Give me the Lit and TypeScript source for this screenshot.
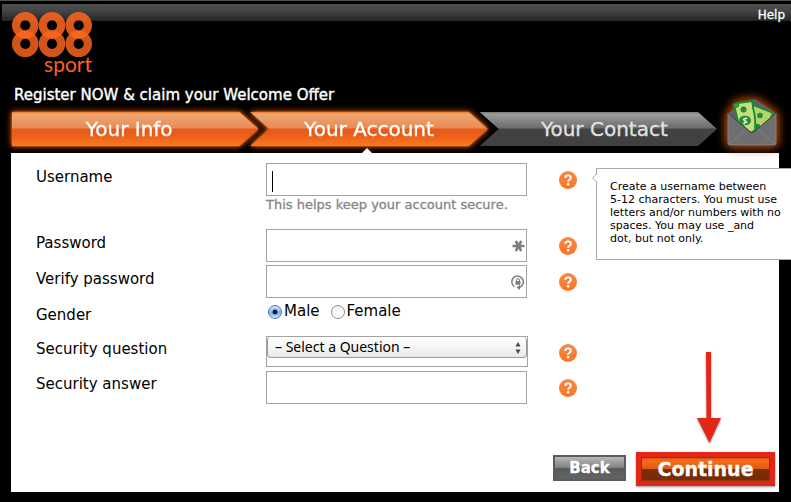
import { LitElement, html, css, svg, nothing } from "lit";
import { customElement, property, state } from "lit/decorators.js";
import { classMap } from "lit/directives/class-map.js";

const SANS = css`"DejaVu Sans", Verdana, "Liberation Sans", sans-serif`;

@customElement("brand-logo")
class BrandLogo extends LitElement {
  static styles = css`
    :host { display: flex; flex-direction: column; width: 80px; }
    svg { display: block; width: 80px; height: 46px; }
    .word { align-self: flex-end; font: 21px/20px Lato, sans-serif; color: #f9631f; margin-top: -4px; }
  `;
  render() {
    return html`
      <svg viewBox="0 0 80 46" fill="none" stroke="#ff661f" stroke-width="8.2" aria-label="888">
        ${[13.3, 40, 66.7].map(
          (x) => svg`<g><circle cx=${x} cy="13.3" r="9.2" opacity=".86"/><circle cx=${x} cy="31.8" r="9.2" opacity=".82"/></g>`
        )}
      </svg>
      <span class="word">sport</span>
    `;
  }
}

@customElement("step-bar")
class StepBar extends LitElement {
  @property({ type: Array }) steps: string[] = [];
  @property({ type: Number }) current = 0;

  static styles = css`
    :host { display: block; }
    ol { display: flex; margin: 0; padding: 0; list-style: none; }
    li { flex: 1; position: relative; }
    li.first { flex: 1 1 9px; }
    li + li { margin-left: -8px; }
    .lit { filter: drop-shadow(0 0 1px #ff7a1c) drop-shadow(0 0 3px #d85300); }
    .shape {
      height: 34px; box-sizing: border-box; display: flex; align-items: center; justify-content: center;
      font: 20px/34px ${SANS}; color: #e2e2e2; -webkit-text-stroke: 0.3px;
      background: linear-gradient(#727272 0, #9c9c9c 2px, #6c6c6c 16px, #434343 17px, #404040 100%);
      clip-path: polygon(0 0, calc(100% - 19px) 0, 100% 50%, calc(100% - 19px) 100%, 0 100%, 19px 50%);
    }
    .first .shape { padding-right: 12px; clip-path: polygon(0 0, calc(100% - 19px) 0, 100% 50%, calc(100% - 19px) 100%, 0 100%); }
    .last .shape { padding-left: 12px; }
    .lit .shape {
      color: #fff;
      background: linear-gradient(#f47a25 0, #eda672 2px, #e98b55 16px, #e9591a 17px, #ec5f1a 24px, #fb7a20 100%);
    }
    .here::after {
      content: ""; position: absolute; top: 36px; left: 50%; margin-left: -7px;
      border: 5px solid transparent; border-top: 0; border-bottom-color: #fff;
    }
  `;
  render() {
    return html`<ol>
      ${this.steps.map(
        (s, i) => html`<li class=${classMap({ first: i === 0, last: i === this.steps.length - 1, here: i === this.current })}>
          <div class=${classMap({ lit: i <= this.current })}><div class="shape">${s}</div></div>
        </li>`
      )}
    </ol>`;
  }
}

@customElement("cash-envelope")
class CashEnvelope extends LitElement {
  static styles = css`
    :host { display: block; width: 50px; height: 47px; filter: drop-shadow(0 0 4px #b04a0c) drop-shadow(0 0 5px #8a3400); }
    svg { display: block; }
  `;
  render() {
    return html`
      <svg width="50" height="47" viewBox="0 0 50 47" aria-label="Welcome offer">
        <path d="M1 15 L22 2 Q26 0 30 2 L49 15 L40 32 H10Z" fill="#5f5f61" stroke="#747476" stroke-width=".8"/>
        <g stroke="#128a3a" stroke-width="1.800" stroke-linejoin="round">
          <path d="M26 6 L46 14 Q44 19 41 23 L31 33 L26 32Z" fill="#b4d468"/>
          <circle cx="33" cy="16.500" r="2.800" fill="#238a3c" stroke="none"/>
          <path d="M29 25 Q34 24 33 29 L29 32Z" fill="#1f8a3c" stroke="none"/>
          <path d="M11 4 L25 2 Q26 5 26 9 Q29 18 28 31 L24 34 L11 23 Q10 17 8 10 L7 8Z" fill="#c3e078"/>
          <path d="M6 5 L11 4 L12 7 L8 9Z" fill="#2aa24b" stroke-width="1"/>
          <circle cx="16.500" cy="10.500" r="3" fill="#238a3c" stroke="none"/>
          <ellipse cx="18" cy="21.500" rx="6" ry="4.800" fill="#1f8a3c" stroke="none"/>
          <path d="M20.500 19.500 C17 18.500 15 20.500 17.500 21.500 C21 22.500 21 24.300 15.800 24 M18.800 18 L17.200 25.300" fill="none" stroke="#eef7c8" stroke-width="1.100"/>
        </g>
        <path d="M1 14 L23 33 Q25 34.500 27 33 L49 14 V44 Q49 46 47 46 H3 Q1 46 1 44Z" fill="#6f6f71" stroke="#868688" stroke-width=".8"/>
        <path d="M1 14 L23 33 Q25 34.500 27 33 L49 14" fill="none" stroke="#3a3a3d" stroke-width="1"/>
        <path d="M2 45 L19 30 M48 45 L31 30" stroke="#858587" stroke-width=".8"/>
      </svg>
    `;
  }
}

@customElement("help-button")
class HelpButton extends LitElement {
  static styles = css`
    :host { display: block; }
    button { display: block; width: 18px; height: 18px; padding: 0; border: 0; background: none; }
    svg { display: block; }
  `;
  render() {
    return html`<button type="button" aria-label="Help with this field">
      <svg width="18" height="18" viewBox="0 0 18 18">
        <defs><linearGradient id="g" x1="0" y1="0" x2="0" y2="1"><stop offset="0" stop-color="#f08a4c"/><stop offset="1" stop-color="#ff7420"/></linearGradient></defs>
        <circle cx="9" cy="9" r="9" fill="url(#g)"/>
        <path d="M6.200 6.800 Q6.400 4.400 9 4.400 Q11.800 4.400 11.800 6.700 Q11.800 8 10.300 8.900 Q9.100 9.600 9.100 10.900" fill="none" stroke="#fff" stroke-width="1.900"/>
        <circle cx="9.100" cy="13.200" r="1.250" fill="#fff"/>
      </svg>
    </button>`;
  }
}

@customElement("app-root")
class AppRoot extends LitElement {
  @state() private gender = "Male";

  static styles = css`
    :host { display: block; min-height: 100vh; box-sizing: border-box; overflow: hidden; background: #000; font: 15px/18px ${SANS}; color: #000; }
    .topbar { border-top: 1px solid #505050; padding: 3px 0 0 2px; }
    .strip { display: flex; justify-content: flex-end; height: 17px; padding-right: 6px; background: linear-gradient(#4c4c4c, #474747 6px, #242424); }
    .help { font-size: 12px; line-height: 22px; color: #fff; text-decoration: none; -webkit-text-stroke: 0.3px; }
    .brand { position: relative; margin: -9px 0 0 12px; }
    h1 { margin: 12px 0 0 14px; font-size: 15px; line-height: 18px; font-weight: 400; color: #fff; -webkit-text-stroke: 0.4px; }
    .progress { display: flex; align-items: flex-end; gap: 10px; margin: -5px 14px 7px 12px; }
    step-bar { flex: 1; }
    form { margin: 0 12px 10px 11px; padding: 10px 4px 6px 25px; background: #fff; }
    .rows { display: flex; flex-direction: column; gap: 3px; }
    .row { position: relative; display: grid; grid-template-columns: 199px 262px 18px; column-gap: 31px; align-items: start; min-height: 33px; }
    .name { padding-top: 5px; }
    .low > .name { padding-top: 4px; }
    .short { min-height: 32px; }
    .field { position: relative; }
    .field input { display: block; box-sizing: border-box; width: 261px; height: 33px; padding: 0 24px 0 5px; border: 1px solid #a3a3a3; border-radius: 0; outline: 0; background: #fff; font: inherit; caret-color: transparent; }
    .caret { position: absolute; left: 6px; top: 8px; width: 1px; height: 21px; background: #000; }
    .glyph { position: absolute; right: 3px; top: 10px; }
    .hint { display: block; height: 29px; margin-top: 1px; font-size: 13px; line-height: 15px; color: #858585; -webkit-text-stroke: 0.3px; }
    help-button { margin-top: 8px; }
    .radios { display: flex; gap: 11px; padding: 1px 0 0 2px; }
    .radios label { display: flex; align-items: center; gap: 2px; }
    .radios input { appearance: none; width: 14px; height: 14px; margin: 2px 0 0; border: 1px solid #8f8f8f; border-radius: 50%; background: linear-gradient(#f2f2f2, #fff); }
    .radios input:checked { border-color: #5876a8; background: radial-gradient(circle, #10203c 0 2px, transparent 3px), linear-gradient(#cfe4fa, #79b4ee 60%, #c4ecff); }
    .drop { position: relative; box-sizing: border-box; height: 31px; border: 1px solid #a3a3a3; }
    .drop select { appearance: none; display: block; box-sizing: border-box; width: 100%; height: 21px; padding: 0 22px 0 7px; border: 1px solid #9a9a9a; border-top: 0; border-radius: 4px; background: linear-gradient(#fff, #f6f6f6 50%, #e9e9e9); font: 14px/20px "Noto Sans", ${SANS}; color: #000; }
    .updown { position: absolute; right: 6px; top: 5px; pointer-events: none; }
    .tip { position: absolute; left: 560px; top: 5px; box-sizing: border-box; width: 220px; height: 92px; padding: 11px 13px; border: 1px solid #a9a9a9; background: #fff; font-size: 11px; line-height: 13px; z-index: 1; white-space: pre-line; }
    .tip svg { position: absolute; left: -5px; top: 4px; }
    .actions { display: flex; flex-direction: column; align-items: flex-end; margin-top: -52px; }
    .arrow { margin-right: 53px; filter: drop-shadow(0 1px 1px #999); }
    .buttons { display: flex; align-items: center; gap: 10px; margin-top: 8px; }
    .buttons button { box-sizing: border-box; padding: 0; font-family: inherit; font-weight: 700; color: #fff; -webkit-text-stroke: 0.3px; }
    .back { width: 73px; height: 26px; margin-top: -2px; border: 2px solid #5c5c5c; font-size: 15px; line-height: 20px; background: linear-gradient(#b8b8b8, #808080 50%, #5a5a5a 52%, #636363); }
    .go { width: 139px; height: 34px; border: 5px solid #e42618; font-size: 19px; line-height: 22px; background: linear-gradient(#cf5010, #fb6c1c 4px, #dd5a12 50%, #7c2f05 52%, #742a04); box-shadow: inset 0 0 0 1px #8a3a0a, 0 1px 2px #999; }
  `;

  private label(id: string, text: string) {
    return html`<label class="name" for=${id}>${text}</label>`;
  }

  private option(value: string) {
    return html`<label><input type="radio" name="gender" value=${value} .checked=${this.gender === value}
      @change=${() => (this.gender = value)} />${value}</label>`;
  }

  private textField(id: string, type: string, icon: unknown = nothing) {
    return html`<div class="field"><input id=${id} type=${type} />${icon}</div>`;
  }

  render() {
    const star = html`<svg class="glyph" width="13" height="14" viewBox="0 0 13 14" stroke="#7e7e7e" stroke-width="2.600">
      <path d="M.5 7H12.500M3.700 2L9.300 12M9.300 2L3.700 12"/></svg>`;
    const lock = html`<svg class="glyph" width="14" height="15" viewBox="0 0 14 15" fill="none" stroke="#7e7e7e">
      <path d="M3.500 11.800A5.800 5.800 0 1 1 8 12.500" stroke-width="1.500"/>
      <path d="M9 9.800L5.500 12.400L9 15Z" fill="#7e7e7e" stroke="none"/>
      <rect x="4.500" y="6" width="5" height="3.800" fill="#7e7e7e" stroke="none"/>
      <path d="M5.500 6V5Q5.500 3.800 7 3.800Q8.500 3.800 8.500 5V6"/></svg>`;
    return html`
      <header>
        <div class="topbar"><div class="strip"><a class="help" href="#help">Help</a></div></div>
        <brand-logo class="brand"></brand-logo>
        <h1>Register NOW &amp; claim your Welcome Offer</h1>
        <div class="progress">
          <step-bar .steps=${["Your Info", "Your Account", "Your Contact"]} .current=${1}></step-bar>
          <cash-envelope></cash-envelope>
        </div>
      </header>
      <form @submit=${(e: Event) => e.preventDefault()}>
        <div class="rows">
          <div class="row">
            ${this.label("user", "Username")}
            <div>
              ${this.textField("user", "text", html`<span class="caret"></span>`)}
              <span class="hint">This helps keep your account secure.</span>
            </div>
            <help-button></help-button>
            <div class="tip" role="tooltip"><svg width="6" height="11" viewBox="0 0 6 11"><path d="M5 0V1L1 5L5 9V10H6V0Z" fill="#fff"/><path d="M5 .5L.7 5L5 9.500" fill="none" stroke="#a9a9a9"/></svg>${"Create a username between\n5-12 characters. You must use\nletters and/or numbers with no\nspaces. You may use _and\ndot, but not only."}</div>
          </div>
          <div class="row">${this.label("pass", "Password")}${this.textField("pass", "password", star)}<help-button></help-button></div>
          <div class="row">${this.label("verify", "Verify password")}${this.textField("verify", "password", lock)}<help-button></help-button></div>
          <div class="row short" role="radiogroup" aria-labelledby="gender">
            <span class="name" id="gender">Gender</span>
            <div class="radios">${this.option("Male")}${this.option("Female")}</div>
          </div>
          <div class="row low short">
            ${this.label("question", "Security question")}
            <div class="drop">
              <select id="question"><option>– Select a Question –</option></select>
              <svg class="updown" width="6" height="12" viewBox="0 0 6 12" fill="#444"><path d="M3 0L5.500 4.500H.5ZM3 12L.5 7.500H5.500Z"/></svg>
            </div>
            <help-button></help-button>
          </div>
          <div class="row low">${this.label("answer", "Security answer")}${this.textField("answer", "text")}<help-button></help-button></div>
        </div>
        <div class="actions">
          <svg class="arrow" width="26" height="92" viewBox="0 0 26 92" fill="#e42618"><path d="M10 0H15V66H25L13.500 91L1 66H10.500Z"/></svg>
          <div class="buttons">
            <button class="back" type="button">Back</button>
            <button class="go" type="submit">Continue</button>
          </div>
        </div>
      </form>
    `;
  }
}
